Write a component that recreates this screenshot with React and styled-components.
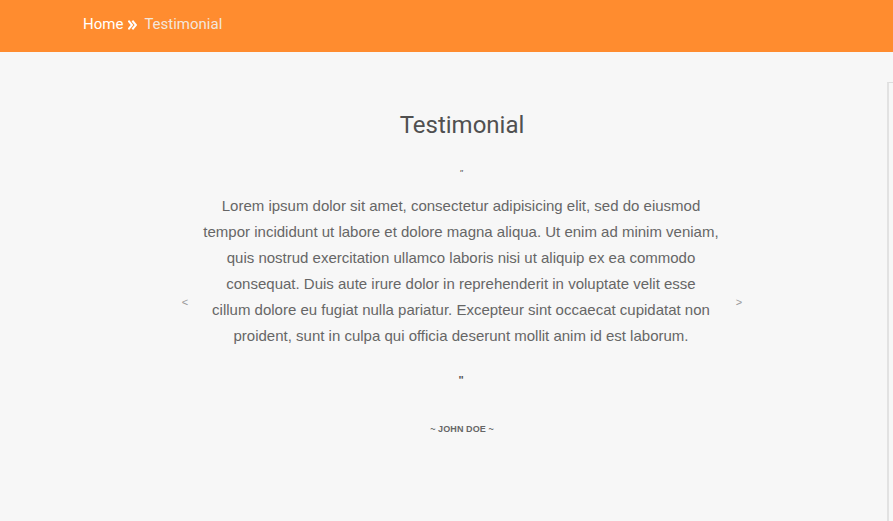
import React from 'react';
import styled, { createGlobalStyle } from 'styled-components';

const GlobalStyle = createGlobalStyle`
  html, body {
    margin: 0;
    padding: 0;
    height: 100%;
    overflow: hidden;
    background: #f7f7f7;
  }
  #root {
    min-height: 100%;
  }
`;

const Page = styled.div`
  width: 893px;
  height: 521px;
  display: flex;
  flex-direction: column;
  background: #f7f7f7;
  font-family: Roboto, "Liberation Sans", sans-serif;
`;

const TopBar = styled.header`
  height: 52px;
  flex: none;
  background: #ff8c2f;
  display: flex;
  align-items: center;
  padding-left: 83px;
  box-sizing: border-box;
`;

const Crumb = styled.a`
  font-size: 15px;
  color: ${p => (p.$current ? '#f3e6dc' : '#ffffff')};
  text-decoration: none;
  line-height: 1;
  padding-bottom: 3px;
`;

const Separator = styled.span`
  display: inline-flex;
  margin: 0 7px 0 5px;
  padding-bottom: 2px;
`;

const Body = styled.div`
  flex: 1;
  display: flex;
`;

const Stage = styled.section`
  width: 887px;
  flex: none;
  box-sizing: border-box;
  padding: 59px 0 0 37px;
  display: flex;
  flex-direction: column;
  align-items: center;
`;

const SidePanel = styled.aside`
  flex: 1;
  margin-top: 30px;
  border-top: 1px solid #dddddd;
  border-left: 2px solid #e2e2e2;
  background: #f7f7f7;
`;

const Title = styled.h2`
  margin: 0;
  font-weight: 400;
  font-size: 24px;
  line-height: 29px;
  color: #505050;
`;

const Slider = styled.div`
  display: flex;
  align-items: center;
  margin-top: 27px;
`;

const Arrow = styled.button`
  border: none;
  background: none;
  padding: 0;
  width: 12px;
  font-family: "Liberation Sans", sans-serif;
  font-size: 11px;
  color: #999999;
  cursor: pointer;
  margin-top: 50px;
`;

const Slide = styled.div`
  width: 518px;
  margin: 0 13px 0 11px;
  display: flex;
  flex-direction: column;
  align-items: center;
  font-family: "Liberation Sans", Arial, sans-serif;
`;

const QuoteMark = styled.span`
  font-size: ${p => (p.$close ? '11px' : '9px')};
  font-weight: ${p => (p.$close ? 700 : 400)};
  font-style: ${p => (p.$close ? 'normal' : 'italic')};
  color: #555555;
  line-height: 12px;
`;

const Quote = styled.p`
  margin: 14px 0 25px;
  text-align: center;
  font-size: 15px;
  line-height: 26px;
  color: #666666;
  white-space: nowrap;
`;

const Author = styled.div`
  margin-top: 38px;
  font-family: "Liberation Sans", Arial, sans-serif;
  font-size: 9px;
  font-weight: 700;
  color: #666666;
  letter-spacing: 0.1px;
`;

const ChevronsRight = () => (
  <svg width="9" height="10" viewBox="0 0 9 10" fill="none" stroke="#fff" strokeWidth="2" strokeLinecap="square">
    <path d="M1 1.5 L4 5 L1 8.5" />
    <path d="M5 1.5 L8 5 L5 8.5" />
  </svg>
);

const lines = [
  'Lorem ipsum dolor sit amet, consectetur adipisicing elit, sed do eiusmod',
  'tempor incididunt ut labore et dolore magna aliqua. Ut enim ad minim veniam,',
  'quis nostrud exercitation ullamco laboris nisi ut aliquip ex ea commodo',
  'consequat. Duis aute irure dolor in reprehenderit in voluptate velit esse',
  'cillum dolore eu fugiat nulla pariatur. Excepteur sint occaecat cupidatat non',
  'proident, sunt in culpa qui officia deserunt mollit anim id est laborum.',
];

export default function App() {
  return (
    <>
      <GlobalStyle />
      <Page>
        <TopBar>
          <Crumb href="#">Home</Crumb>
          <Separator><ChevronsRight /></Separator>
          <Crumb $current>Testimonial</Crumb>
        </TopBar>
        <Body>
          <Stage>
            <Title>Testimonial</Title>
            <Slider>
              <Arrow aria-label="previous">&lt;</Arrow>
              <Slide>
                <QuoteMark>"</QuoteMark>
                <Quote>
                  {lines.map((l, i) => (
                    <React.Fragment key={i}>
                      {l}
                      {i < lines.length - 1 && <br />}
                    </React.Fragment>
                  ))}
                </Quote>
                <QuoteMark $close>"</QuoteMark>
              </Slide>
              <Arrow aria-label="next">&gt;</Arrow>
            </Slider>
            <Author>~ JOHN DOE ~</Author>
          </Stage>
          <SidePanel />
        </Body>
      </Page>
    </>
  );
}
